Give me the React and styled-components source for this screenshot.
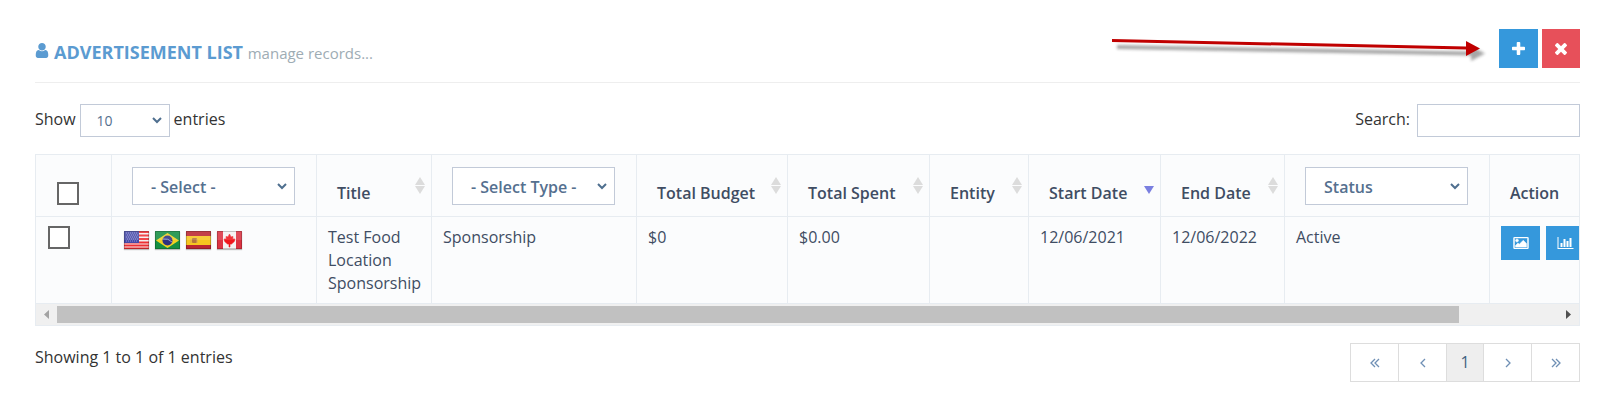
import React, { useEffect, useRef, useState } from "react";
import styled, { createGlobalStyle } from "styled-components";

const columns = [
  { key: "check", width: 76, type: "check" },
  { key: "country", width: 205, type: "select", label: "- Select -" },
  { key: "title", width: 115, type: "sort", label: "Title" },
  { key: "type", width: 205, type: "select", label: "- Select Type -" },
  { key: "budget", width: 151, type: "sort", label: "Total Budget" },
  { key: "spent", width: 142, type: "sort", label: "Total Spent" },
  { key: "entity", width: 99, type: "sort", label: "Entity" },
  { key: "start", width: 132, type: "sort", label: "Start Date", sorted: true },
  { key: "end", width: 124, type: "sort", label: "End Date" },
  { key: "status", width: 205, type: "select", label: "Status" },
  { key: "action", width: 198, type: "text", label: "Action" },
];

const tableWidth = columns.reduce((sum, col) => sum + col.width, 0);

const records = [
  {
    title: "Test Food Location Sponsorship",
    type: "Sponsorship",
    budget: "$0",
    spent: "$0.00",
    entity: "",
    start: "12/06/2021",
    end: "12/06/2022",
    status: "Active",
  },
];

const icons = {
  user: {
    box: "256 128 1280 1536",
    d: "M1536 1399q0 109-62.500 187t-150.500 78h-854q-88 0-150.500-78t-62.500-187q0-85 8.500-160.500t31.500-152 58.500-131 94-89 134.500-34.500q131 128 313 128t313-128q76 0 134.500 34.500t94 89 58.500 131 31.500 152 8.500 160.500zm-256-887q0 159-112.500 271.500t-271.500 112.500-271.500-112.500-112.500-271.500 112.500-271.500 271.500-112.500 271.500 112.500 112.500 271.500z",
  },
  plus: {
    box: "192 128 1408 1408",
    d: "M1600 736v192q0 40-28 68t-68 28h-416v416q0 40-28 68t-68 28h-192q-40 0-68-28t-28-68v-416h-416q-40 0-68-28t-28-68v-192q0-40 28-68t68-28h416v-416q0-40 28-68t68-28h192q40 0 68 28t28 68v416h416q40 0 68 28t28 68z",
  },
  times: {
    box: "302 366 1188 1188",
    d: "M1490 1322q0 40-28 68l-136 136q-28 28-68 28t-68-28l-294-294-294 294q-28 28-68 28t-68-28l-136-136q-28-28-28-68t28-68l294-294-294-294q-28-28-28-68t28-68l136-136q28-28 68-28t68 28l294 294 294-294q28-28 68-28t68 28l136 136q28 28 28 68t-28 68l-294 294 294 294q28 28 28 68z",
  },
  image: {
    box: "-64 128 1920 1536",
    d: "M576 576q0 80-56 136t-136 56-136-56-56-136 56-136 136-56 136 56 56 136zm1024 384v448h-1408v-192l320-320 160 160 512-512zm96-704h-1600q-13 0-22.500 9.500t-9.500 22.500v1216q0 13 9.500 22.500t22.500 9.500h1600q13 0 22.500-9.500t9.500-22.500v-1216q0-13-9.500-22.500t-22.500-9.500zm160 32v1216q0 66-47 113t-113 47h-1600q-66 0-113-47t-47-113v-1216q0-66 47-113t113-47h1600q66 0 113 47t47 113z",
  },
  chart: {
    box: "0 128 2048 1536",
    d: "M640 896v512h-256v-512h256zm384-512v1024h-256v-1024h256zm1024 1152v128h-2048v-1536h128v1408h1920zm-640-896v768h-256v-768h256zm384-384v1152h-256v-1152h256z",
  },
};

const Icon = ({ name, width, height, stroke = 0 }) => (
  <svg
    width={width}
    height={height}
    viewBox={icons[name].box}
    fill="currentColor"
    stroke="currentColor"
    strokeWidth={stroke}
    aria-hidden="true"
  >
    <path d={icons[name].d} />
  </svg>
);

const Angle = ({ double, flip }) => (
  <svg width="10" height="10" viewBox="0 0 10 10" fill="none" stroke="currentColor" strokeWidth="1.3" aria-hidden="true">
    <g transform={flip ? "translate(10 0) scale(-1 1)" : undefined}>
      {double ? (
        <path d="M5 1L1 5L5 9M9 1L5 5L9 9" />
      ) : (
        <path d="M7 1L3 5L7 9" />
      )}
    </g>
  </svg>
);

const SortArrows = ({ sorted }) => (
  <svg width="10" height="17" viewBox="0 0 10 17" aria-hidden="true">
    {!sorted && <path d="M5 0L10 8H0Z" fill="#dcdcdc" />}
    <path d="M0 9H10L5 17Z" fill={sorted ? "#7a7fe0" : "#dcdcdc"} />
  </svg>
);

const flags = [
  {
    name: "United States",
    art: (
      <>
        <rect width="25" height="18" fill="#f4eeee" />
        <path d="M0 1H25M0 4.500H25M0 8H25M0 11.500H25M0 14.500H25M0 17.500H25" stroke="#ee2f33" strokeWidth="1.8" />
        <rect width="15" height="12" fill="#4549a8" />
        <path d="M2 2H14M3 4H14M2 6H14M3 8H14M2 10H14" stroke="#9395d2" strokeDasharray="1 1" />
      </>
    ),
  },
  {
    name: "Brazil",
    art: (
      <>
        <rect width="25" height="18" fill="#148f42" />
        <path d="M12.500 2L24 9.500L12.500 17L1 9.500Z" fill="#f0d022" />
        <circle cx="12.500" cy="9.500" r="5" fill="#2e3180" />
        <path d="M8 8Q13 7 17 11" stroke="#8f9bd0" fill="none" />
      </>
    ),
  },
  {
    name: "Spain",
    art: (
      <>
        <rect width="25" height="18" fill="#bb2530" />
        <rect y="5" width="25" height="9" fill="#f6c51f" />
        <rect x="6" y="7" width="5" height="5" rx="1" fill="#b5743a" />
        <path d="M5 8V12M11 8V12" stroke="#d9a64e" />
      </>
    ),
  },
  {
    name: "Canada",
    art: (
      <>
        <rect width="25" height="18" fill="#f5f2f2" />
        <path d="M0 0H6V18H0ZM19 0H25V18H19Z" fill="#dc3342" />
        <path d="M12.500 3L14 6L16 5.500L15.700 8L18 8L17.300 10.500L14.500 13L13 13V16H12V13L10.500 13L7.700 10.500L7 8L9.300 8L9 5.500L11 6Z" fill="#f0161c" stroke="#f0161c" strokeWidth="0.6" />
      </>
    ),
  },
];

const Flag = ({ name, art }) => (
  <FlagSvg viewBox="0 0 25 18" role="img" aria-label={name}>
    {art}
    <path d="M0 0H25V9H0Z" fill="#fff" opacity="0.12" />
    <path d="M0.500 0.500H24.500V17.500H0.500Z" fill="none" stroke="#000" opacity="0.2" />
  </FlagSvg>
);

function HeaderCell({ col }) {
  if (col.type === "check") return <Checkbox type="checkbox" aria-label="Select all" />;
  if (col.type === "select") {
    return (
      <Select aria-label={col.key}>
        <option>{col.label}</option>
      </Select>
    );
  }
  if (col.type === "sort") {
    return (
      <SortButton>
        {col.label}
        <SortArrows sorted={col.sorted} />
      </SortButton>
    );
  }
  return col.label;
}

function ScrollTable({ children }) {
  const view = useRef(null);
  const [bar, setBar] = useState({ size: 100, offset: 0 });

  const measure = () => {
    const el = view.current;
    setBar({
      size: (el.clientWidth / el.scrollWidth) * 100,
      offset: (el.scrollLeft / el.scrollWidth) * 100,
    });
  };

  useEffect(() => {
    measure();
    window.addEventListener("resize", measure);
    return () => window.removeEventListener("resize", measure);
  }, []);

  const move = (step) => view.current.scrollBy({ left: step });

  return (
    <TableFrame>
      <Viewport ref={view} onScroll={measure}>
        {children}
      </Viewport>
      <ScrollBar>
        <ScrollArrow aria-label="Scroll left" $dim={bar.offset === 0} onClick={() => move(-40)}>
          <svg width="5" height="9" viewBox="0 0 5 9"><path d="M5 0V9L0 4.500Z" fill="currentColor" /></svg>
        </ScrollArrow>
        <Track>
          <Thumb style={{ width: `${bar.size}%`, marginLeft: `${bar.offset}%` }} />
        </Track>
        <ScrollArrow aria-label="Scroll right" onClick={() => move(40)}>
          <svg width="5" height="9" viewBox="0 0 5 9"><path d="M0 0V9L5 4.500Z" fill="currentColor" /></svg>
        </ScrollArrow>
      </ScrollBar>
    </TableFrame>
  );
}

export default function App() {
  return (
    <Page>
      <GlobalStyle />
      <Header>
        <Title>
          <Icon name="user" width={14} height={15} />
          Advertisement List <Subtitle>manage records...</Subtitle>
        </Title>
        <Actions>
          <IconButton aria-label="Add">
            <Icon name="plus" width={13} height={13} />
          </IconButton>
          <IconButton aria-label="Delete" $danger>
            <Icon name="times" width={12} height={12} />
          </IconButton>
        </Actions>
        <Pointer viewBox="0 0 384 30" aria-hidden="true">
          <defs>
            <filter id="soft" x="-5%" y="-50%" width="110%" height="200%">
              <feGaussianBlur stdDeviation="1.5" />
            </filter>
          </defs>
          <g transform="translate(5 5)" filter="url(#soft)" opacity="0.4">
            <path d="M4 4L358 10.500V5L372 12.500L358 20V14.500L4 8Z" fill="#222" />
          </g>
          <path d="M4 3L358 10.500V5L372 12.500L358 20V13.500L4 6Z" fill="#c00000" />
        </Pointer>
      </Header>

      <Controls>
        <Label>
          Show
          <Select $small defaultValue="10">
            <option>10</option>
            <option>25</option>
            <option>50</option>
          </Select>
          entries
        </Label>
        <Label $gap={7}>
          Search:
          <SearchInput type="search" />
        </Label>
      </Controls>

      <ScrollTable>
        <Table>
          <colgroup>
            {columns.map((col) => (
              <Col key={col.key} $width={col.width} />
            ))}
          </colgroup>
          <thead>
            <tr>
              {columns.map((col) => (
                <Th key={col.key} $type={col.type}>
                  <HeaderCell col={col} />
                </Th>
              ))}
            </tr>
          </thead>
          <tbody>
            {records.map((row) => (
              <tr key={row.title}>
                <Td>
                  <Checkbox type="checkbox" aria-label={row.title} />
                </Td>
                <Td>
                  <Flags>
                    {flags.map((flag) => (
                      <Flag key={flag.name} {...flag} />
                    ))}
                  </Flags>
                </Td>
                <Td>{row.title}</Td>
                <Td>{row.type}</Td>
                <Td>{row.budget}</Td>
                <Td>{row.spent}</Td>
                <Td>{row.entity}</Td>
                <Td>{row.start}</Td>
                <Td>{row.end}</Td>
                <Td>{row.status}</Td>
                <Td>
                  <RowActions>
                    <IconButton aria-label="Images" $small>
                      <Icon name="image" width={16} height={12} stroke={60} />
                    </IconButton>
                    <IconButton aria-label="Statistics" $small>
                      <Icon name="chart" width={17} height={12} />
                    </IconButton>
                  </RowActions>
                </Td>
              </tr>
            ))}
          </tbody>
        </Table>
      </ScrollTable>

      <Footer>
        <Info>Showing 1 to 1 of 1 entries</Info>
        <Pagination aria-label="Pages">
          <PageLink href="#first" aria-label="First"><Angle double /></PageLink>
          <PageLink href="#prev" aria-label="Previous"><Angle /></PageLink>
          <PageLink href="#1" $active>1</PageLink>
          <PageLink href="#next" aria-label="Next"><Angle flip /></PageLink>
          <PageLink href="#last" aria-label="Last"><Angle double flip /></PageLink>
        </Pagination>
      </Footer>
    </Page>
  );
}

const GlobalStyle = createGlobalStyle`
  * {
    box-sizing: border-box;
  }
  body {
    margin: 0;
    background: #fff;
    color: #333;
    font: 16px/23px "Open Sans", sans-serif;
  }
  button, input, select {
    margin: 0;
    font: inherit;
    color: inherit;
  }
`;

const Page = styled.div`
  padding: 29px 23px 32px 35px;
`;

const Header = styled.header`
  position: relative;
  display: flex;
  justify-content: space-between;
  padding-bottom: 14px;
  border-bottom: 1px solid #eee;
`;

const Title = styled.h1`
  margin: 0;
  padding-top: 10px;
  color: #5b9bd1;
  font-size: 18px;
  font-weight: 700;
  line-height: 26px;
  text-transform: uppercase;
  svg {
    margin: 0 5px 1px 0;
  }
`;

const Subtitle = styled.small`
  color: #9eacb4;
  font-size: 15px;
  font-weight: 400;
  text-transform: none;
`;

const Actions = styled.div`
  display: flex;
  gap: 4px;
`;

const IconButton = styled.button`
  display: flex;
  align-items: center;
  justify-content: center;
  width: ${(p) => (p.$danger ? 38 : 39)}px;
  height: ${(p) => (p.$small ? 34 : 39)}px;
  padding: 0;
  border: 0;
  color: #fff;
  background: ${(p) => (p.$danger ? "#e7505a" : "#3598dc")};
  cursor: pointer;
`;

const Pointer = styled.svg`
  position: absolute;
  top: 7px;
  right: 88px;
  width: 384px;
  height: 30px;
  pointer-events: none;
`;

const Controls = styled.div`
  display: flex;
  justify-content: space-between;
  margin: 21px 0 17px;
`;

const Label = styled.label`
  display: flex;
  gap: ${(p) => p.$gap || 4}px;
  line-height: 30px;
`;

const chevron = encodeURIComponent(
  '<svg xmlns="http://www.w3.org/2000/svg" width="10" height="7"><path d="M1 1L5 5L9 1" fill="none" stroke="#4f6f8f" stroke-width="2"/></svg>'
);

const Select = styled.select`
  appearance: none;
  display: block;
  width: ${(p) => (p.$small ? "90px" : "100%")};
  height: ${(p) => (p.$small ? 33 : 38)}px;
  padding: ${(p) => (p.$small ? "0 24px 0 16px" : "2px 24px 0 18px")};
  border: 1px solid #c2cad8;
  border-radius: 0;
  color: #55708f;
  font-size: ${(p) => (p.$small ? 14 : 16)}px;
  background: #fff url("data:image/svg+xml,${chevron}") no-repeat right 7px center;
`;

const SearchInput = styled.input`
  width: 163px;
  height: 33px;
  padding: 0 12px;
  border: 1px solid #c2cad8;
  outline: 0;
`;

const TableFrame = styled.div`
  border: 1px solid #e7ecf1;
  background: #fbfcfd;
`;

const Viewport = styled.div`
  overflow-x: auto;
  scrollbar-width: none;
`;

const Table = styled.table`
  width: 100%;
  min-width: ${tableWidth}px;
  table-layout: fixed;
  border-spacing: 0;
  color: #3f4d63;
`;

const Col = styled.col`
  width: ${(p) => p.$width}px;
`;

const Th = styled.th`
  padding: 12px ${(p) => (p.$type === "sort" ? 6 : 21)}px 11px ${(p) => (p.$type === "check" ? 21 : 20)}px;
  border-right: 1px solid #e7ecf1;
  border-bottom: 1px solid #e7ecf1;
  font-weight: 600;
  text-align: left;
  vertical-align: bottom;
`;

const Td = styled.td`
  padding: 9px 11px 8px;
  border-right: 1px solid #e7ecf1;
  border-bottom: 1px solid #e7ecf1;
  vertical-align: top;
  &:first-child, &:nth-child(2) {
    padding-left: 12px;
  }
`;

const SortButton = styled.button`
  display: flex;
  align-items: flex-end;
  justify-content: space-between;
  width: 100%;
  padding: 0;
  border: 0;
  background: none;
  white-space: nowrap;
  cursor: pointer;
  svg {
    flex: none;
    margin-bottom: 11px;
  }
`;

const Checkbox = styled.input`
  appearance: none;
  display: block;
  width: 22px;
  height: 23px;
  border: 2px solid #666;
  background: #fff;
`;

const Flags = styled.div`
  display: flex;
  gap: 6px;
  padding-top: 5px;
`;

const FlagSvg = styled.svg`
  width: 25px;
  height: 18px;
  box-shadow: 0 1px 1px #bbb;
`;

const RowActions = styled.div`
  display: flex;
  gap: 6px;
`;

const ScrollBar = styled.div`
  display: flex;
  align-items: center;
  height: 21px;
  background: #f0f0f0;
`;

const ScrollArrow = styled.button`
  display: flex;
  align-items: center;
  justify-content: center;
  width: 21px;
  height: 21px;
  padding: 0;
  border: 0;
  color: ${(p) => (p.$dim ? "#a3a3a3" : "#505050")};
  background: none;
`;

const Track = styled.div`
  flex: 1;
  overflow: hidden;
`;

const Thumb = styled.div`
  height: 17px;
  background: #c1c1c1;
`;

const Footer = styled.footer`
  display: flex;
  justify-content: space-between;
  margin-top: 17px;
`;

const Info = styled.div`
  padding-top: 3px;
`;

const Pagination = styled.nav`
  display: flex;
  border: 1px solid #ddd;
`;

const PageLink = styled.a`
  display: flex;
  align-items: center;
  justify-content: center;
  width: ${(p) => (p.$active ? 37 : 48)}px;
  height: 37px;
  border-right: 1px solid #ddd;
  color: ${(p) => (p.$active ? "#3f5f80" : "#6f8fb5")};
  background: ${(p) => (p.$active ? "#eee" : "#fff")};
  text-decoration: none;
  &:last-child {
    width: 47px;
    border-right: 0;
  }
`;
